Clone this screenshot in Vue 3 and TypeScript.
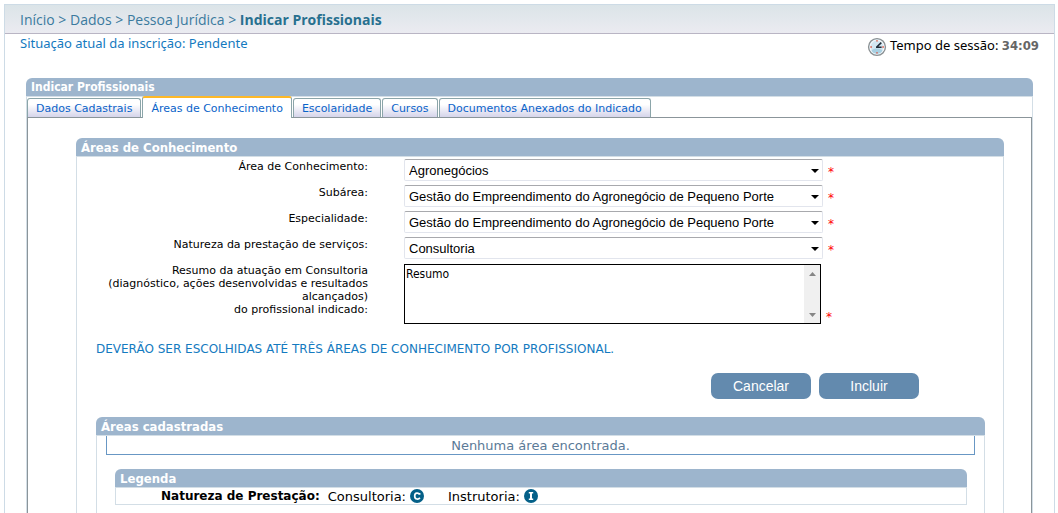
<script setup lang="ts">
import { ref } from 'vue'

interface Field { id: string; label: string; value: string }

const tabs = ['Dados Cadastrais', 'Áreas de Conhecimento', 'Escolaridade', 'Cursos', 'Documentos Anexados do Indicado']
const activeTab = ref(1)
const fields = ref<Field[]>([
  { id: 'area', label: 'Área de Conhecimento:', value: 'Agronegócios' },
  { id: 'subarea', label: 'Subárea:', value: 'Gestão do Empreendimento do Agronegócio de Pequeno Porte' },
  { id: 'especialidade', label: 'Especialidade:', value: 'Gestão do Empreendimento do Agronegócio de Pequeno Porte' },
  { id: 'natureza', label: 'Natureza da prestação de serviços:', value: 'Consultoria' },
])
const resumo = ref('Resumo')
</script>

<template>
  <div class="page">
    <nav class="breadcrumb">
      <a href="#">Início</a> &gt; <a href="#">Dados</a> &gt; <a href="#">Pessoa Jurídica</a> &gt; <strong>Indicar Profissionais</strong>
    </nav>
    <div class="status">
      <span class="situation">Situação atual da inscrição: Pendente</span>
      <span class="session">
        <svg class="clock" viewBox="0 0 20 20" width="20" height="20" aria-hidden="true">
          <circle cx="10" cy="10" r="8.4" fill="#b9cfdd" stroke="#8b9092" stroke-width="1.4" />
          <circle cx="10" cy="10" r="7" fill="#d3e6f1" stroke="#f7f9fa" stroke-width="1.2" />
          <path d="M4.4 13.4a6.4 6.4 0 0 0 11.2 0c-3-2.4-8.2-2.4-11.2 0z" fill="#a9d0e2" />
          <path d="M9.5 10.3 14.3 5.6M9 10.3h5.6" stroke="#222d38" stroke-width="1.6" fill="none" />
          <path d="M9.3 3.2h1.4v1.4H9.3zM9.3 15.2h1.4v1.4H9.3zM3.4 9.3h1.4v1.4H3.4zM15.4 9.3h1.4v1.4h-1.4z" fill="#e0452f" />
        </svg>
        <span>Tempo de sessão: <b>34:09</b></span>
      </span>
    </div>

    <section class="panel main-panel">
      <h2>Indicar Profissionais</h2>
      <div class="panel-body">
        <div class="tabs" role="tablist">
          <button
            v-for="(tab, i) in tabs"
            :key="tab"
            type="button"
            role="tab"
            :aria-selected="i === activeTab"
            :class="['tab', { active: i === activeTab }]"
            @click="activeTab = i"
          >{{ tab }}</button>
        </div>
        <div class="tab-body">
          <section class="panel area-panel">
            <h2>Áreas de Conhecimento</h2>
            <form class="panel-body" @submit.prevent>
              <div v-for="f in fields" :key="f.id" class="row">
                <label :for="f.id">{{ f.label }}</label>
                <div class="control">
                  <div class="select">
                    <select :id="f.id" v-model="f.value"><option>{{ f.value }}</option></select>
                    <svg viewBox="0 0 8 4" width="8" height="4" aria-hidden="true"><path d="M0 0h8L4 4z" /></svg>
                  </div>
                  <span class="req">*</span>
                </div>
              </div>
              <div class="row summary">
                <label for="resumo">Resumo da atuação em Consultoria<br>(diagnóstico, ações desenvolvidas e resultados alcançados)<br>do profissional indicado:</label>
                <div class="control">
                  <div class="memo">
                    <textarea id="resumo" v-model="resumo"></textarea>
                    <div class="scroll" aria-hidden="true">
                      <svg viewBox="0 0 7 4" width="7" height="4"><path d="M0 4h7L3.5 0z" /></svg>
                      <svg viewBox="0 0 7 4" width="7" height="4"><path d="M0 0h7L3.5 4z" /></svg>
                    </div>
                  </div>
                  <span class="req">*</span>
                </div>
              </div>
              <p class="note">DEVERÃO SER ESCOLHIDAS ATÉ TRÊS ÁREAS DE CONHECIMENTO POR PROFISSIONAL.</p>
              <div class="actions">
                <button type="button">Cancelar</button>
                <button type="submit">Incluir</button>
              </div>
              <section class="panel list-panel">
                <h2>Áreas cadastradas</h2>
                <div class="panel-body">
                  <p class="empty">Nenhuma área encontrada.</p>
                  <section class="panel legend-panel">
                    <h2>Legenda</h2>
                    <div class="panel-body legend">
                      <b>Natureza de Prestação:</b>
                      <span class="item">Consultoria:
                        <svg viewBox="0 0 14 14" width="14" height="14" role="img" aria-label="Consultoria">
                          <circle cx="7" cy="7" r="7" fill="#046088" />
                          <path d="M9.6 5.7V3.9M9.4 5.4C8.8 3.7 4.7 3.2 4.7 7s4 3.6 5.2 1.7" fill="none" stroke="#fff" stroke-width="1.7" />
                        </svg>
                      </span>
                      <span class="item">Instrutoria:
                        <svg viewBox="0 0 14 14" width="14" height="14" role="img" aria-label="Instrutoria">
                          <circle cx="7" cy="7" r="7" fill="#046088" />
                          <path d="M4.8 3h4.4v1.4H8v5.2h1.2V11H4.8V9.6H6V4.4H4.8z" fill="#fff" />
                        </svg>
                      </span>
                    </div>
                  </section>
                </div>
              </section>
            </form>
          </section>
        </div>
      </div>
    </section>
  </div>
</template>

<style>
html, body { height: 100%; background: #fff; }
#app { display: flex; flex-direction: column; min-height: 100%; }
</style>

<style scoped>
* { box-sizing: border-box; }
.page {
  flex: 1;
  display: flex;
  flex-direction: column;
  margin: 4px 3px 0 4px;
  border: 1px solid #cddbe6;
  border-bottom: 0;
  font-family: "DejaVu Sans", Verdana, sans-serif;
  font-size: 11px;
  color: #000;
}
.breadcrumb {
  height: 29px;
  padding: 0 15px;
  font-family: "Open Sans", Tahoma, sans-serif;
  font-size: 14px;
  line-height: 30px;
  color: #3b7a9e;
  background: linear-gradient(#dbe4e8, #ebebf1);
  border-bottom: 1px solid #b9b5c4;
}
.breadcrumb a { color: inherit; text-decoration: none; }
.breadcrumb strong { color: #28708f; }
.status {
  display: flex;
  justify-content: space-between;
  height: 44px;
  padding: 0 15px;
  font-family: "Noto Sans", Tahoma, sans-serif;
  font-size: 13px;
  line-height: 19px;
}
.situation { color: #147ac0; }
.session { display: flex; align-items: flex-start; gap: 3px; padding-top: 2px; }
.session b { color: #666; font-family: "DejaVu Sans Condensed", Verdana, sans-serif; font-size: 13px; }
.clock { margin-top: 1px; }

.panel { display: flex; flex-direction: column; }
.panel h2 {
  margin: 0;
  height: 18px;
  padding-left: 5px;
  line-height: 19px;
  font-family: "DejaVu Sans Condensed", Tahoma, sans-serif;
  font-size: 13px;
  color: #fff;
  background: #9db5cd;
  border-radius: 6px 6px 0 0;
}
.panel-body { flex: 1; display: flex; flex-direction: column; border: 1px solid #d3dee6; border-bottom: 0; }
.main-panel { flex: 1; margin: 0 21px; }
.main-panel > h2 { font-size: 12px; }

.tabs { display: flex; align-items: flex-end; gap: 1px; height: 20px; }
.tab {
  height: 19px;
  margin: 0;
  padding: 0 8px;
  border: 1px solid #8ba5a9;
  border-bottom: 0;
  border-radius: 3px 3px 0 0;
  background: linear-gradient(#fff 30%, #d5d4ea);
  font: 11px/17px "DejaVu Sans", Verdana, sans-serif;
  color: #0a63c9;
  white-space: nowrap;
}
.tab.active { position: relative; height: 22px; margin-bottom: -1px; border-top: 2px solid #fdb827; background: #fff; }
.tab-body { flex: 1; display: flex; flex-direction: column; padding: 20px 27px 0 48px; border: 1px solid #8b959a; border-bottom: 0; }
.area-panel, .list-panel { flex: 1; }

.row { display: grid; grid-template-columns: 272px 1fr; column-gap: 36px; height: 26px; padding-left: 19px; }
.row label { padding-top: 3px; line-height: 13px; text-align: right; }
.control { display: flex; align-items: flex-start; gap: 5px; padding-top: 2px; }
.select { position: relative; width: 419px; }
.select select {
  display: block;
  appearance: none;
  width: 100%;
  height: 22px;
  padding: 0 20px 0 4px;
  border: 1px solid #e2e5ed;
  border-top-color: #a8a9ad;
  border-radius: 2px;
  background: #fff;
  font: 13px "Liberation Sans", Arial, sans-serif;
  color: #000;
}
.select svg { position: absolute; right: 4px; top: 10px; }
.req { color: #f00; font-size: 12px; line-height: 26px; }
.summary { height: auto; }
.summary .control { align-items: flex-end; padding-top: 3px; }
.summary .req { line-height: 14px; }
.memo { display: flex; width: 417px; height: 60px; border: 1px solid #000; }
.memo textarea {
  flex: 1;
  resize: none;
  border: 0;
  padding: 1px;
  font: 12px/16px "DejaVu Sans Condensed", Tahoma, sans-serif;
  color: #000;
  outline: 0;
  overflow: hidden;
}
.scroll { display: flex; flex-direction: column; justify-content: space-between; align-items: center; width: 16px; padding: 7px 0 6px; background: #f0f0f0; fill: #868686; }
.note { margin: 19px 0 0 19px; line-height: 13px; font-size: 12px; color: #147ac0; }
.actions { display: flex; justify-content: flex-end; gap: 8px; margin: 17px 84px 18px 0; }
.actions button {
  width: 100px;
  height: 26px;
  border: 0;
  border-radius: 7px;
  background: #638aae;
  color: #fff;
  font: 14px "Liberation Sans", Arial, sans-serif;
}
.list-panel { margin: 0 18px 0 19px; }
.empty {
  margin: 0 9px 14px;
  height: 19px;
  border: 1px solid #6897c4;
  border-top: 0;
  text-align: center;
  font-size: 13px;
  line-height: 19px;
  color: #5b7a97;
}
.legend-panel { margin: 0 17px 8px 18px; }
.legend { flex: none; flex-direction: row; align-items: center; gap: 8px; height: 18px; padding-left: 45px; border-bottom: 1px solid #d3dee6; font-size: 12px; }
.legend .item { display: flex; align-items: center; gap: 4px; margin-right: 16px; font-size: 13px; }
</style>
